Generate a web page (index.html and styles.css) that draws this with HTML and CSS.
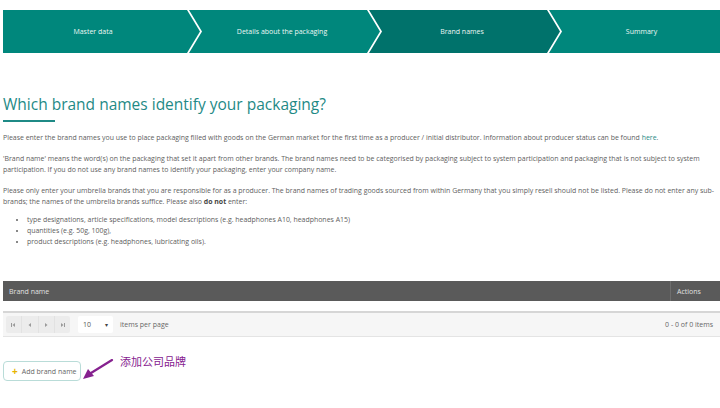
FILE: index.html
```html
<!DOCTYPE html>
<html lang="en">
<head>
<meta charset="utf-8">
<title>Brand names</title>
<link rel="stylesheet" href="styles.css">
</head>
<body>
<div class="page">
  <nav class="stepper">
    <div class="step first">Master data</div>
    <div class="step">Details about the packaging</div>
    <div class="step active">Brand names</div>
    <div class="step last">Summary</div>
  </nav>

  <h1 class="title">Which brand names identify your packaging?</h1>
  <div class="title-rule"></div>

  <div class="copy">
    <p>Please enter the brand names you use to place packaging filled with goods on the German market for the first time as a producer / initial distributor. Information about producer status can be found <a class="link" href="#">here</a>.</p>
    <p>'Brand name' means the word(s) on the packaging that set it apart from other brands. The brand names need to be categorised by packaging subject to system participation and packaging that is not subject to system participation. If you do not use any brand names to identify your packaging, enter your company name.</p>
    <p>Please only enter your umbrella brands that you are responsible for as a producer. The brand names of trading goods sourced from within Germany that you simply resell should not be listed. Please do not enter any sub-brands; the names of the umbrella brands suffice. Please also <b>do not</b> enter:</p>
    <ul>
      <li>type designations, article specifications, model descriptions (e.g. headphones A10, headphones A15)</li>
      <li>quantities (e.g. 50g, 100g),</li>
      <li>product descriptions (e.g. headphones, lubricating oils).</li>
    </ul>
  </div>

  <div class="grid">
    <div class="grid-head">
      <div class="col-name">Brand name</div>
      <div class="col-actions">Actions</div>
    </div>
    <div class="grid-body"></div>
    <div class="pager">
      <div class="pager-nav">
        <span class="pbtn"><svg width="5" height="4" viewBox="0 0 5 4"><rect x="0" y="0" width="1" height="4" fill="#9a9a9a"/><path d="M4 0 L1.5 2 L4 4 Z" fill="#9a9a9a"/></svg></span>
        <span class="pbtn"><svg width="4" height="4" viewBox="0 0 4 4"><path d="M3 0 L0.5 2 L3 4 Z" fill="#9a9a9a"/></svg></span>
        <span class="pbtn"><svg width="4" height="4" viewBox="0 0 4 4"><path d="M1 0 L3.5 2 L1 4 Z" fill="#9a9a9a"/></svg></span>
        <span class="pbtn"><svg width="5" height="4" viewBox="0 0 5 4"><path d="M1 0 L3.5 2 L1 4 Z" fill="#9a9a9a"/><rect x="4" y="0" width="1" height="4" fill="#9a9a9a"/></svg></span>
      </div>
      <div class="pager-size"><span>10</span><span class="caret">&#9662;</span></div>
      <span class="pager-label">items per page</span>
      <span class="pager-info">0 - 0 of 0 items</span>
    </div>
  </div>

  <div class="add-row">
    <button class="add-btn" type="button"><span class="plus">+</span>Add brand name</button>
    <div class="annotation">
      <svg class="arrow" width="32" height="22" viewBox="0 0 32 22"><path d="M30 1 L9 14" stroke="#86218f" stroke-width="2.2" fill="none" stroke-linecap="round"/><path d="M1 20 L6 10 L12 17 Z" fill="#86218f"/></svg>
      <span class="note">添加公司品牌</span>
    </div>
  </div>
</div>
</body>
</html>
```

FILE: styles.css
```css
html, body {
  margin: 0;
  padding: 0;
  background: #ffffff;
  overflow: hidden;
}
body {
  font-family: "Open Sans", "Noto Sans", sans-serif;
  color: #5c5c5c;
  width: 720px;
  height: 408px;
}
.page {
  padding: 10px 0 0 3px;
}
.stepper {
  display: flex;
  height: 43px;
  width: 730px;
  overflow: hidden;
}
.step {
  flex: 0 0 191px;
  margin-left: -11px;
  background: #00877c;
  color: #eef7f5;
  font-size: 7px;
  display: flex;
  align-items: center;
  justify-content: center;
  padding-left: 13px;
  padding-right: 18px;
  box-sizing: border-box;
  clip-path: polygon(0 0, calc(100% - 13px) 0, 100% 50%, calc(100% - 13px) 100%, 0 100%, 13px 50%);
}
.step.first {
  flex-basis: 197px;
  margin-left: 0;
  padding-left: 0;
  padding-right: 17px;
  clip-path: polygon(0 0, calc(100% - 13px) 0, 100% 50%, calc(100% - 13px) 100%, 0 100%);
}
.step.active {
  background: #00726b;
}
.step.last {
  flex: 0 0 200px;
  padding-right: 28px;
  clip-path: polygon(0 0, 100% 0, 100% 100%, 0 100%, 13px 50%);
}
.title {
  margin: 41px 0 0 0;
  font-size: 15.5px;
  font-weight: 400;
  line-height: 20px;
  color: #1f8a86;
}
.title-rule {
  width: 52px;
  height: 2px;
  background: #1f8a86;
  margin-top: 6px;
}
.copy {
  font-size: 6.94px;
  line-height: 11px;
  color: #606060;
  margin-top: 10px;
  width: 717px;
}
.copy p {
  margin: 0 0 10px 0;
}
.copy b {
  font-weight: 700;
  color: #444;
}
.link {
  color: #1f8a86;
  text-decoration: none;
}
.copy ul {
  margin: -3px 0 0 0;
  padding-left: 24px;
}
.grid {
  width: 717px;
  margin-top: 34px;
  font-size: 7px;
}
.grid-head {
  display: flex;
  height: 20px;
  background: #5a5a5a;
  color: #e0e0e0;
  align-items: stretch;
}
.col-name {
  flex: 1;
  display: flex;
  align-items: center;
  padding-left: 6px;
}
.col-actions {
  width: 50px;
  box-sizing: border-box;
  border-left: 1px solid #6e6e6e;
  display: flex;
  align-items: center;
  padding-left: 6px;
}
.grid-body {
  height: 10px;
  border-bottom: 2px solid #d6d6d6;
}
.pager {
  display: flex;
  align-items: center;
  height: 23px;
  background: #f6f6f6;
  border-bottom: 1px solid #e4e4e4;
  padding: 0 7px 0 3px;
  color: #666;
}
.pager-nav {
  display: flex;
  width: 64px;
  background: #ececec;
  border-radius: 2px;
  height: 17px;
}
.pbtn {
  flex: 1;
  display: flex;
  align-items: center;
  justify-content: center;
  border-right: 1px solid #e2e2e2;
}
.pbtn:last-child {
  border-right: none;
}
.pager-size {
  margin-left: 8px;
  width: 35px;
  height: 17px;
  background: #ffffff;
  border-radius: 2px;
  display: flex;
  align-items: center;
  justify-content: space-between;
  padding: 0 5px;
  box-sizing: border-box;
  color: #555;
}
.caret {
  font-size: 6px;
  color: #444;
}
.pager-label {
  margin-left: 7px;
}
.pager-info {
  margin-left: auto;
}
.add-row {
  display: flex;
  align-items: flex-start;
  margin-top: 23px;
}
.add-btn {
  margin-top: 1px;
  height: 20px;
  width: 78px;
  border: 1px solid #b9dcd8;
  border-radius: 4px;
  background: #ffffff;
  font-family: "Open Sans", "Noto Sans", sans-serif;
  font-size: 7px;
  color: #666;
  display: flex;
  align-items: center;
  padding: 0 0 0 8px;
}
.plus {
  color: #e6b400;
  font-size: 10px;
  font-weight: 700;
  margin-right: 4px;
  line-height: 1;
}
.annotation {
  display: flex;
  align-items: flex-start;
  margin-left: 1px;
}
.arrow {
  margin-top: -1px;
}
.note {
  margin-left: 6px;
  margin-top: -7px;
  font-family: "Noto Sans CJK SC", sans-serif;
  font-size: 11px;
  color: #86218f;
}
```
